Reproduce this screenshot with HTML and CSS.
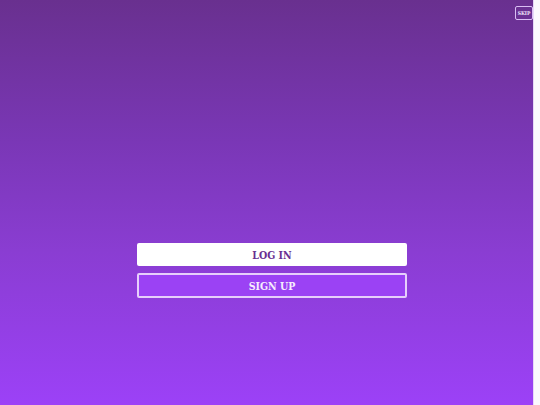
FILE: index.html
```html
<!DOCTYPE html>
<html>
<head>
<meta charset="utf-8">
<link rel="stylesheet" href="styles.css">
</head>
<body>
<div class="screen">
  <div class="top">
    <button class="skip">SKIP</button>
  </div>
  <div class="actions">
    <button class="btn btn-login">LOG IN</button>
    <button class="btn btn-signup">SIGN UP</button>
  </div>
</div>
</body>
</html>
```
FILE: styles.css
```css
html, body {
  margin: 0;
  padding: 0;
  background: #fbf9fd;
}
body {
  width: 540px;
  height: 405px;
  overflow: hidden;
  font-family: "DejaVu Serif Condensed", "DejaVu Serif", serif;
}
.screen {
  width: 534px;
  height: 405px;
  background: linear-gradient(180deg, #69308f 0%, #7a37b6 35%, #8a3dd2 62%, #9c41f7 100%);
  border-right: 1px solid #e7d8f7;
  display: flex;
  flex-direction: column;
  box-sizing: border-box;
}
.top {
  display: flex;
  justify-content: flex-end;
  padding: 6px 0 0 0;
  height: 243px;
  box-sizing: border-box;
}
.skip {
  width: 18px;
  height: 14px;
  padding: 0;
  border: 1px solid #d9bdf3;
  border-radius: 2px;
  background: transparent;
  color: #f0e4fb;
  font-family: inherit;
  font-weight: bold;
  font-size: 5px;
  line-height: 12px;
}
.actions {
  display: flex;
  flex-direction: column;
  gap: 7px;
  margin-left: 137px;
  width: 270px;
}
.btn {
  height: 24px;
  padding: 0;
  border-radius: 2px;
  font-family: inherit;
  font-weight: bold;
  font-size: 10.5px;
  letter-spacing: 0;
  box-sizing: border-box;
}
.btn-login {
  background: #ffffff;
  border: none;
  color: #6a2f92;
  height: 23px;
}
.btn-signup {
  background: #9b42f4;
  border: 2px solid #e6cffb;
  color: #f6edfd;
  height: 25px;
}
```
